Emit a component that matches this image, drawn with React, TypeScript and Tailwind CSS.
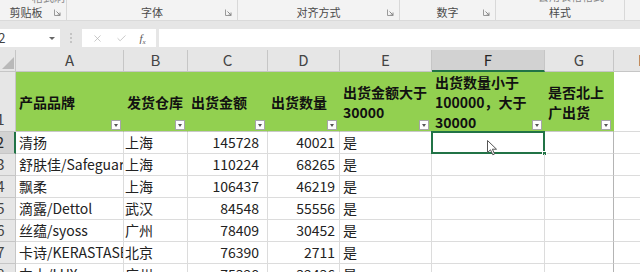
import { X, Check } from 'lucide-react';

const FONT = { fontFamily: '"Noto Sans CJK SC", "Noto Sans", sans-serif' };

// ribbon group strip: widths in px, label, has dialog launcher
const groups = [
  { w: 81, label: '剪贴板' },
  { w: 171, label: '字体' },
  { w: 162, label: '对齐方式' },
  { w: 96, label: '数字' },
  { w: 129, label: '样式' },
];

const letters = ['A', 'B', 'C', 'D', 'E', 'F', 'G', 'H'];

const headers = [
  ['产品品牌'],
  ['发货仓库'],
  ['出货金额'],
  ['出货数量'],
  ['出货金额大于', '30000'],
  ['出货数量小于', '100000，大于', '30000'],
  ['是否北上', '广出货'],
];

const rows = [
  ['清扬', '上海', '145728', '40021', '是'],
  ['舒肤佳/Safeguard', '上海', '110224', '68265', '是'],
  ['飘柔', '上海', '106437', '46219', '是'],
  ['滴露/Dettol', '武汉', '84548', '55556', '是'],
  ['丝蕴/syoss', '广州', '78409', '30452', '是'],
  ['卡诗/KERASTASE', '北京', '76390', '2711', '是'],
  ['力士/LUX', '广州', '75328', '32436', '是'],
];

function Launcher() {
  return (
    <svg width="7" height="7" viewBox="0 0 7 7" className="absolute right-[5px] bottom-[4px]">
      <path d="M0.5 0.5V6.5H6.5" fill="none" stroke="#9a9a9a" strokeWidth="1" />
      <path d="M2.5 2.5L6 6M6 3.5V6H3.5" fill="none" stroke="#8a8a8a" strokeWidth="1" />
    </svg>
  );
}

function FilterBtn() {
  return (
    <div className="absolute right-[2px] bottom-[1px] w-[10px] h-[10px] bg-[#fdfdfd] border border-[#a6a6a6] flex items-center justify-center">
      <div className="w-0 h-0 border-l-[2.5px] border-r-[2.5px] border-t-[3px] border-l-transparent border-r-transparent border-t-[#555]" />
    </div>
  );
}

function Pointer() {
  return (
    <svg width="11" height="16" viewBox="0 0 11 16" className="absolute left-[55px] top-[8px]">
      <path d="M0.5 0.5V12.5L3.5 9.8L5.8 14.8L7.6 14L5.4 9.2H9.5Z" fill="#fff" stroke="#555" strokeWidth="1" strokeLinejoin="round" />
    </svg>
  );
}

export default function App() {
  return (
    <div className="w-[640px] h-[272px] overflow-hidden bg-white" style={FONT}>
      <div className="-ml-[14px] w-[700px]">
        {/* ribbon group captions */}
        <div className="h-[21px] bg-[#f3f3f3] border-b border-[#dadada] flex relative">
          <span className="absolute left-[46px] -top-[11px] text-[11px] text-[#888]">格式刷</span>
          <span className="absolute left-[552px] -top-[12px] text-[11px] text-[#888]">套用表格格式</span>
          {groups.map((g) => (
            <div
              key={g.label}
              className="relative h-full border-r border-[#d8d8d8] flex items-end justify-center pb-[1px]"
              style={{ width: g.w }}
            >
              <span className="text-[11px] leading-[14px] text-[#4a4a4a]">{g.label}</span>
              {g.label !== '样式' && <Launcher />}
            </div>
          ))}
        </div>

        {/* formula bar */}
        <div className="bg-[#e6e6e6] pt-[8px] pb-[3px] flex items-stretch h-[29px]">
          <div className="w-[74px] bg-white flex items-center justify-between pl-[5px] pr-[5px] text-[13px] text-[#444]">
            <span>F2</span>
            <div className="w-0 h-0 border-l-[3px] border-r-[3px] border-t-[3px] border-l-transparent border-r-transparent border-t-[#666]" />
          </div>
          <div className="w-[22px] flex flex-col items-center justify-center gap-[2px]">
            <div className="w-[2px] h-[2px] bg-[#c4c4c4]" />
            <div className="w-[2px] h-[2px] bg-[#c4c4c4]" />
            <div className="w-[2px] h-[2px] bg-[#c4c4c4]" />
          </div>
          <div className="w-[74px] bg-white flex items-center justify-around px-[4px] text-[#b0b0b0]">
            <X size={11} strokeWidth={1.5} />
            <Check size={11} strokeWidth={1.5} />
            <span className="text-[11px] italic text-[#555]" style={{ fontFamily: '"Liberation Serif", serif' }}>
              f<sub className="text-[7px]">x</sub>
            </span>
          </div>
          <div className="w-[3px]" />
          <div className="flex-1 bg-white" />
        </div>

        {/* sheet */}
        <div className="grid grid-cols-[30px_108px_64px_80px_72px_92px_113px_69px_60px] text-[#222]">
          {/* column headings */}
          <div className="h-[22px] bg-[#e6e6e6] border-r border-b border-[#c6c6c6] relative">
            <div
              className="absolute right-[1px] bottom-[2px] w-0 h-0"
              style={{ borderBottom: '12px solid #b9b9b9', borderLeft: '12px solid transparent' }}
            />
          </div>
          {letters.map((l) => (
            <div
              key={l}
              className={
                l === 'F'
                  ? 'h-[22px] bg-[#d2d2d2] border-r border-[#c6c6c6] border-b-2 border-b-[#217346] flex items-center justify-center text-[15px] text-[#262626]'
                  : 'h-[22px] bg-[#e6e6e6] border-r border-b border-[#c6c6c6] flex items-center justify-center text-[15px] text-[#444]'
              }
            >
              {l}
            </div>
          ))}

          {/* row 1: field titles */}
          <div className="h-[60px] bg-[#e6e6e6] border-r border-b border-[#c6c6c6] flex items-end justify-center pb-[1px] text-[15px] text-[#444]">1</div>
          {headers.map((lines, i) => (
            <div
              key={i}
              className="h-[60px] bg-[#92d050] border-r border-[#92d050] border-b border-b-[#c8c8c8] relative flex flex-col justify-center pl-[3px] font-bold text-[14px] leading-[20px] text-[#111] whitespace-nowrap"
            >
              {lines.map((t) => (
                <span key={t}>{t}</span>
              ))}
              <FilterBtn />
            </div>
          ))}
          <div className="h-[60px] border-r border-b border-[#dadada]" />

          {/* data rows */}
          {rows.map((r, i) => (
            <Row key={i} n={i + 2} r={r} selected={i === 0} />
          ))}
        </div>
      </div>
    </div>
  );
}

function Row({ n, r, selected }: { n: number; r: string[]; selected: boolean }) {
  const cell = 'h-[22px] border-r border-b border-[#dcdcdc] flex items-center overflow-hidden whitespace-nowrap text-[14px]';
  return (
    <>
      <div
        className={
          selected
            ? 'h-[22px] bg-[#d2d2d2] border-r-2 border-r-[#217346] border-b border-b-[#c6c6c6] flex items-center justify-center text-[15px] text-[#262626]'
            : 'h-[22px] bg-[#e6e6e6] border-r border-b border-[#c6c6c6] flex items-center justify-center text-[15px] text-[#444]'
        }
      >
        {n}
      </div>
      <div className={`${cell} pl-[3px]`}>{r[0]}</div>
      <div className={`${cell} pl-[1px]`}>{r[1]}</div>
      <div className={`${cell} justify-end pr-[8px]`}>{r[2]}</div>
      <div className={`${cell} justify-end pr-[4px]`}>{r[3]}</div>
      <div className={`${cell} pl-[3px]`}>{r[4]}</div>
      <div className={`${cell} relative overflow-visible`}>
        {selected && (
          <>
            <div className="absolute -left-[1px] -top-[1px] right-[-1px] bottom-[-1px] border-2 border-[#217346]" />
            <div className="absolute -right-[3px] -bottom-[3px] w-[5px] h-[5px] bg-[#217346] border border-white" />
            <Pointer />
          </>
        )}
      </div>
      <div className="h-[22px] border-r border-r-[#b4b4b4] border-b border-b-[#dcdcdc]" />
      <div className="h-[22px] border-r border-b border-[#dcdcdc]" />
    </>
  );
}
